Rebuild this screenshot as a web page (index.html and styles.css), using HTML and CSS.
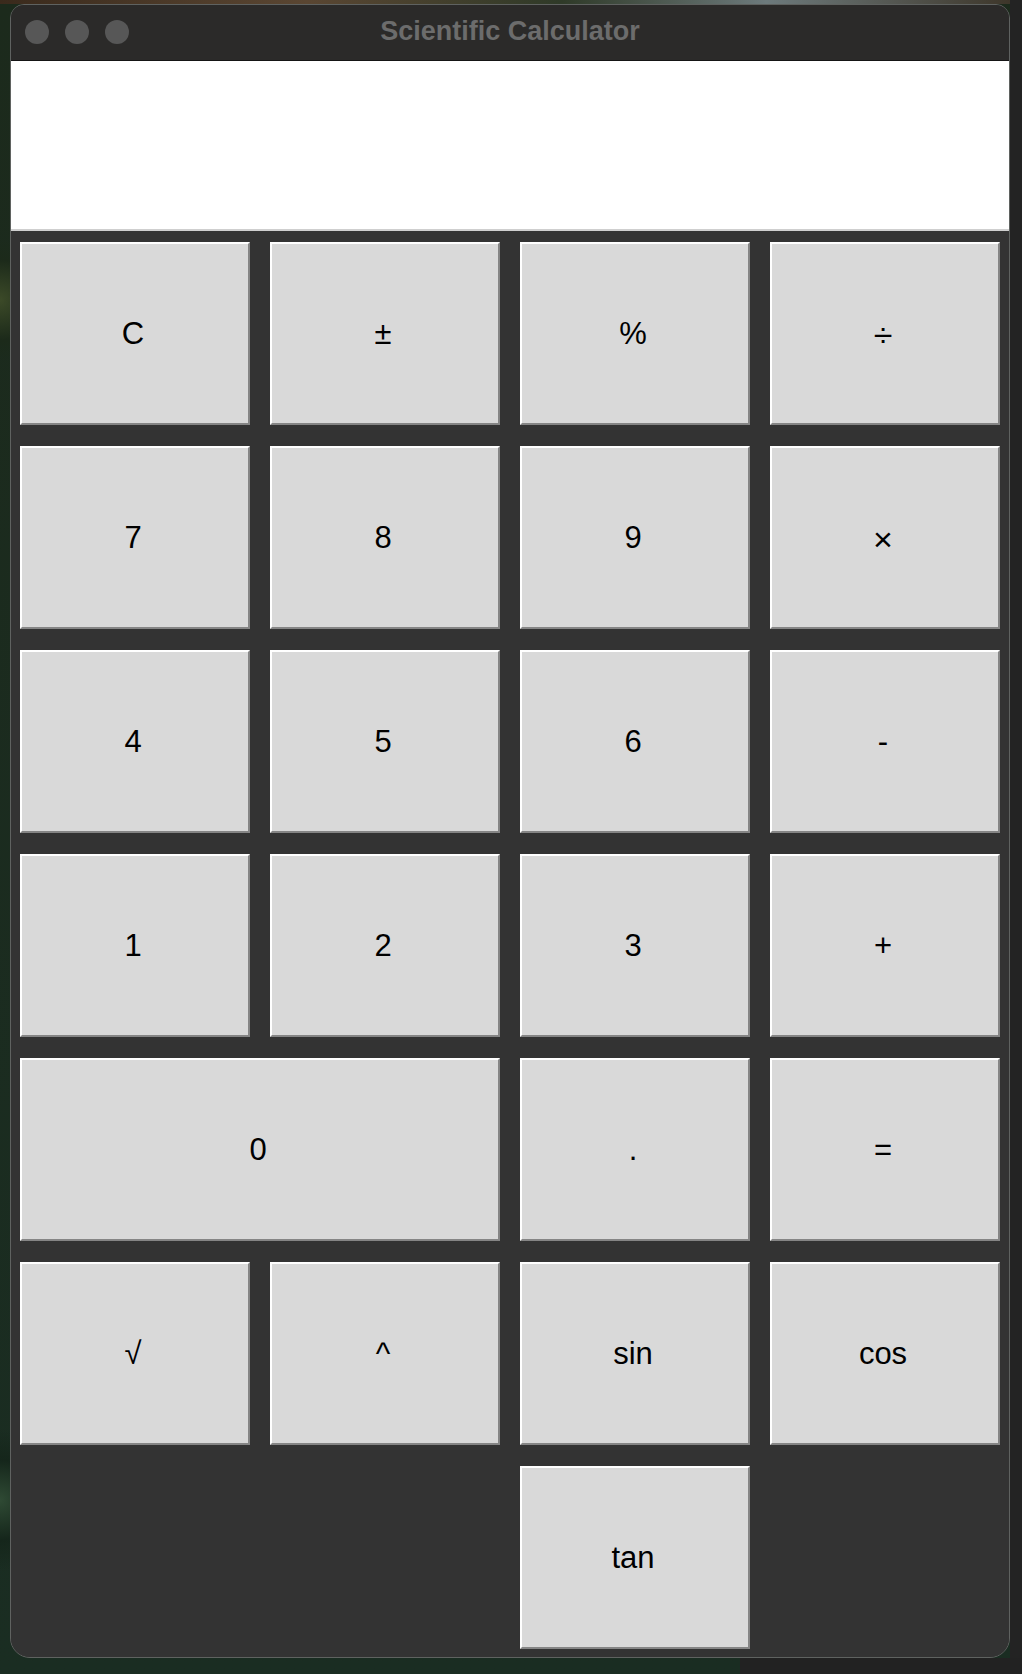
FILE: index.html
```html
<!DOCTYPE html>
<html lang="en">
<head>
<meta charset="utf-8">
<title>Scientific Calculator</title>
<link rel="stylesheet" href="styles.css">
</head>
<body>
<div class="window">
  <div class="titlebar">
    <div class="lights">
      <span class="light"></span>
      <span class="light"></span>
      <span class="light"></span>
    </div>
    <div class="title">Scientific Calculator</div>
    <div class="spacer"></div>
  </div>
  <div class="display"></div>
  <div class="keypad">
    <button class="key">C</button>
    <button class="key">±</button>
    <button class="key">%</button>
    <button class="key sym">÷</button>
    <button class="key">7</button>
    <button class="key">8</button>
    <button class="key">9</button>
    <button class="key sym">×</button>
    <button class="key">4</button>
    <button class="key">5</button>
    <button class="key">6</button>
    <button class="key">-</button>
    <button class="key">1</button>
    <button class="key">2</button>
    <button class="key">3</button>
    <button class="key">+</button>
    <button class="key wide">0</button>
    <button class="key">.</button>
    <button class="key">=</button>
    <button class="key">√</button>
    <button class="key">^</button>
    <button class="key">sin</button>
    <button class="key">cos</button>
    <button class="key col3">tan</button>
  </div>
</div>
</body>
</html>
```

FILE: styles.css
```css
html, body {
  margin: 0;
  padding: 0;
}

body {
  width: 1022px;
  height: 1674px;
  box-sizing: border-box;
  padding: 4px 12px 0 10px;
  overflow: hidden;
  background:
    linear-gradient(#222222, #222222) right bottom / 282px 16px no-repeat,
    linear-gradient(#232323, #232323) right top / 12px 100% no-repeat,
    linear-gradient(90deg, #3a2a1c, #5a4632 30%, #2f3a28 55%, #6d7a7c 75%, #3b3326) left top / 100% 4px no-repeat,
    radial-gradient(circle at 0 300px, #3c4a28 0, #1c2a1a 40px, transparent 60px),
    radial-gradient(circle at 0 1500px, #2f4a34 0, #15261b 40px, transparent 70px),
    linear-gradient(#1c2a1c, #1a2d22);
}

.window {
  width: 1000px;
  height: 1654px;
  box-sizing: border-box;
  border: 1px solid #5f6260;
  border-radius: 14px 14px 20px 20px;
  overflow: hidden;
  background: #333333;
  display: flex;
  flex-direction: column;
}

.titlebar {
  height: 55px;
  flex: none;
  background: #2b2a29;
  border-bottom: 1px solid #151515;
  display: grid;
  grid-template-columns: 1fr auto 1fr;
  align-items: center;
}

.lights {
  display: flex;
  gap: 16px;
  padding-left: 14px;
  padding-bottom: 2px;
}

.light {
  width: 24px;
  height: 24px;
  border-radius: 50%;
  background: #575757;
}

.title {
  font-family: "Liberation Sans", Arial, sans-serif;
  font-weight: bold;
  font-size: 27px;
  color: #6c6c6c;
  padding-bottom: 3px;
}

.display {
  height: 168px;
  flex: none;
  background: #ffffff;
  border-bottom: 2px solid #cfcfcf;
}

.keypad {
  flex: 1;
  display: grid;
  grid-template-columns: repeat(4, 1fr);
  grid-template-rows: repeat(7, 183px);
  column-gap: 20px;
  row-gap: 21px;
  padding: 11px 9px 7px 9px;
  background: #333333;
}

.key {
  margin: 0;
  padding: 0 4px 0 0;
  background: #d9d9d9;
  border-style: solid;
  border-width: 2px;
  border-color: #ffffff #858585 #858585 #ffffff;
  font-family: "Liberation Sans", Arial, sans-serif;
  font-size: 31px;
  color: #000000;
  display: flex;
  align-items: center;
  justify-content: center;
}

.sym {
  font-size: 34px;
  padding-top: 3px;
}

.wide {
  grid-column: span 2;
}

.col3 {
  grid-column: 3;
}
```
